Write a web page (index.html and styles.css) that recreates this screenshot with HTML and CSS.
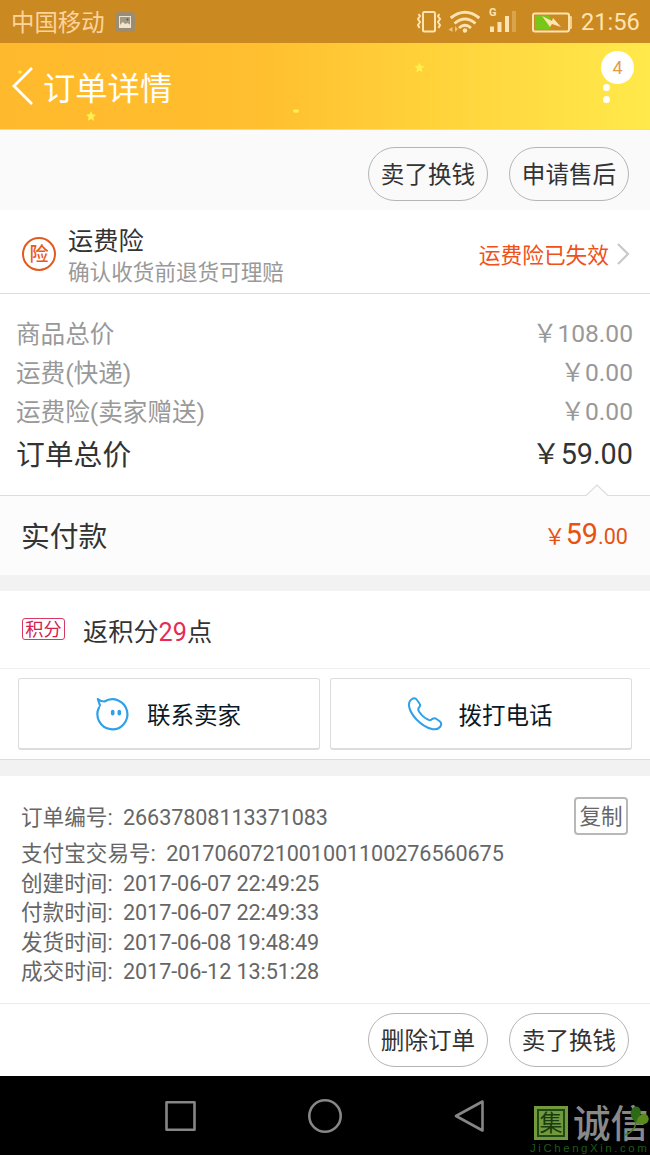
FILE: index.html
```html
<!DOCTYPE html>
<html lang="zh-CN">
<head>
<meta charset="utf-8">
<title>订单详情</title>
<link rel="stylesheet" href="styles.css">
</head>
<body>
<header class="status">
  <span class="carrier">中国移动</span>
  <svg class="shot" width="22" height="22" viewBox="0 0 22 22"><rect x="1" y="1" width="20" height="20" rx="4" fill="#9c8d72"/><rect x="5.500" y="5.500" width="11" height="11" fill="#a39a84" stroke="#eee4cf"/><path d="M6 14l2.500-3 3 2 2-1 3 2v2H6z" fill="#eee4cf"/><circle cx="13.500" cy="8.500" r="1" fill="#5d503a"/></svg>
  <svg class="signals" width="160" height="43" viewBox="415 0 160 43" fill="none" stroke="#ffe3b0" stroke-width="2">
    <rect x="423" y="12" width="12" height="19.500" rx="1.500"/>
    <path d="M418.500 14l1.500 2-2 3 2 3-2 3 1.500 3M439.500 14l-1.500 2 2 3-2 3 2 3-1.500 3" stroke-width="2"/>
    <path d="M450.700 18q14.300-11.500 28.600 0M454.500 23.500q10.500-9 21 0M459 28q6-5.500 12 0" stroke-width="2.900"/>
    <circle cx="465" cy="30.500" r="2.200" fill="#ffe3b0" stroke="none"/>
    <path d="M452.500 27v5l-4-2.500zM455 26v6l3-3z" fill="#ffe3b0" stroke="none" opacity=".65"/>
    <path d="M492 26.500v5.500M499.500 22v10M507 16v16" stroke-width="4"/>
    <path d="M514 11v21" stroke-width="4" opacity=".3"/>
    <text x="489" y="16" class="net">G</text>
    <rect x="533" y="13.500" width="36" height="18" rx="2"/>
    <path d="M569 17h2v11h-2" stroke-width="1.500"/>
    <path d="M535 15.500h14l3 6-2 8h-15z" fill="#77c719" stroke="none"/>
    <path d="M542 16l10 5 1-3 8 9-9-3-2 3z" fill="#ffe3b0" stroke="none"/>
  </svg>
  <span class="clock">21:56</span>
</header>
<div class="titlebar">
  <svg class="back" width="24" height="40" viewBox="0 0 24 40"><path d="M21 2L3 20l18 18" fill="none" stroke="#fff" stroke-width="2.800"/></svg>
  <h1>订单详情</h1>
  <svg class="stars" width="650" height="87" viewBox="0 0 650 87"><defs><path id="star" d="M0-5l1.500 3.300 3.500.4-2.600 2.400.7 3.600L0 3l-3.100 1.700.7-3.600L-5-1.300l3.500-.4z"/></defs><g fill="#fff04e"><use href="#star" x="91" y="73"/><use href="#star" x="419.500" y="24.500"/><ellipse cx="296" cy="68" rx="3" ry="1.800"/><ellipse cx="20" cy="29" rx="2" ry="1.500"/></g></svg>
  <div class="menu"><span class="badge">4</span><i></i><i></i></div>
</div>
<div class="actions top"><button>卖了换钱</button><button>申请售后</button></div>
<section class="insurance">
  <span class="seal">险</span>
  <div class="ins-text"><b>运费险</b><span>确认收货前退货可理赔</span></div>
  <span class="expired">运费险已失效</span>
  <svg class="chev" width="14" height="24" viewBox="0 0 14 24"><path d="M2 2l10 10L2 22" fill="none" stroke="#c9c9c9" stroke-width="2.200"/></svg>
</section>
<section class="prices">
  <div class="row"><span>商品总价</span><span>￥108.00</span></div>
  <div class="row"><span>运费(快递)</span><span>￥0.00</span></div>
  <div class="row"><span>运费险(卖家赠送)</span><span>￥0.00</span></div>
  <div class="row total"><span>订单总价</span><span>￥59.00</span></div>
</section>
<section class="paid">
  <svg class="notch" width="22" height="13" viewBox="0 0 22 13"><path d="M0 12L11 1l11 11v1H0z" fill="#fcfcfc"/><path d="M0 11.500L11 1l11 10.500" fill="none" stroke="#dcdcdc" stroke-width="1.200"/></svg>
  <span>实付款</span><span class="amount">￥<b>59</b>.00</span>
</section>
<div class="gap"></div>
<section class="points"><span class="tag">积分</span><span>返积分<em>29</em>点</span></section>
<section class="contacts">
  <div class="contact">
    <svg width="36" height="36" viewBox="0 0 36 36" fill="none" stroke="#2ea1e8" stroke-width="2.200" stroke-linecap="round" stroke-linejoin="round"><path d="M6 9.500L3.800 3Q6.500 5.500 10.500 5.500A15 15 0 1 1 5 11.500"/><path d="M18.700 15.500v2.200M25.300 15.500v2.200" stroke-width="3.600"/></svg>
    <span>联系卖家</span>
  </div>
  <div class="contact phone">
    <svg width="36" height="36" viewBox="0 0 36 36" fill="none" stroke="#2ea1e8" stroke-width="2" stroke-linejoin="round"><path d="M5 3Q8 1 10 4L12.500 7.500Q14 9.500 12 11.500Q10.500 13 12 15.500Q16 21.500 21 23.500Q23.500 25 25 23.200Q27.500 21.500 29.500 23L33 25.500Q35.500 28 33 31Q30 34.500 24 32.800Q17 31 9.500 23.500Q3 16.500 2 10Q1.500 5 5 3Z"/></svg>
    <span>拨打电话</span>
  </div>
</section>
<div class="gap"></div>
<section class="info">
  <div class="first"><p>订单编号: <span>26637808113371083</span></p><button>复制</button></div>
  <p>支付宝交易号: <span>2017060721001001100276560675</span></p>
  <p>创建时间: <span>2017-06-07 22:49:25</span></p>
  <p>付款时间: <span>2017-06-07 22:49:33</span></p>
  <p>发货时间: <span>2017-06-08 19:48:49</span></p>
  <p>成交时间: <span>2017-06-12 13:51:28</span></p>
</section>
<div class="actions bottom"><button>删除订单</button><button>卖了换钱</button></div>
<footer class="nav">
  <svg width="330" height="44" viewBox="160 1094 330 44" fill="none" stroke="#868686" stroke-width="2.600" stroke-linejoin="round"><rect x="166.500" y="1102.300" width="28" height="27.500"/><circle cx="325" cy="1116" r="15.700"/><path d="M482.500 1101.500v29L456 1116z"/></svg>
  <div class="watermark">
    <div class="brand"><span class="ji"><span>集</span></span><span class="cx">诚信</span></div>
    <div class="site">JiChengXin.com</div>
    <svg class="leaf" width="28" height="34" viewBox="0 0 28 34"><path d="M14 19Q5 10 11 4q5-4 8 3-1 7-5 12" fill="#2c6a16"/><path d="M14 19q3-11 10-9 5 4 1 9-6 3-11 0" fill="#5b8a1c"/><path d="M14 19q-2 9-11 12" fill="none" stroke="#4c7a1c" stroke-width="1.500"/></svg>
  </div>
</footer>
</body>
</html>
```
FILE: styles.css
```css
* { box-sizing: border-box; }
body { margin: 0; width: 650px; height: 1155px; overflow: hidden; background: #fff; color: #333; font-family: Roboto, "Noto Sans CJK SC", sans-serif; display: flex; flex-direction: column; }
body > * { flex-shrink: 0; }
button { font: inherit; color: inherit; padding: 0; background: #fff; }
b, em, h1 { font-weight: 400; font-style: normal; }
p { margin: 0; }

.status { height: 43px; background: #cb8921; color: #ffe3b0; display: flex; align-items: center; padding-left: 11px; }
.carrier { padding-top: 3px; font-size: 23.4px; line-height: 40px; color: #fdd39c; }
.shot { margin-left: 9px; }
.signals { margin-left: auto; }
.net { font: 700 11px Roboto, sans-serif; fill: #ffe3b0; stroke: none; }
.clock { width: 75px; padding: 1px 0 0 6px; font-size: 23.6px; }

.titlebar { position: relative; height: 87px; background: linear-gradient(90deg, #ffb92c 0%, #ffbf2f 40%, #ffd23a 66%, #ffe94b 100%); border-bottom: 1px solid #ffdf68; display: flex; align-items: center; padding-left: 11px; color: #fff; }
.back { margin-right: 8px; }
h1 { margin: 0; padding-top: 6px; font-size: 32.3px; line-height: 44px; }
.stars { position: absolute; left: 0; top: 0; }
.menu { width: 54px; height: 87px; margin-left: auto; padding: 8px 0 0 5px; }
.badge { display: block; width: 33px; height: 33px; border-radius: 50%; background: #fff; color: #e49c46; font-size: 18px; line-height: 34px; text-align: center; }
.menu i { display: block; width: 7px; height: 7px; margin: 0 0 5px 2px; border-radius: 50%; background: #fff; }

.actions { display: flex; justify-content: flex-end; gap: 21px; padding-right: 21px; font-size: 23.6px; }
.actions button { width: 120px; height: 54px; border: 1px solid #b5b5b5; border-radius: 27px; background: transparent; padding-top: 3px; line-height: 49px; }
.top { height: 80px; padding-top: 17px; background: #fafafa; }
.bottom { height: 72px; padding-top: 9px; }

.insurance { height: 84px; border-bottom: 1px solid #dcdcdc; display: flex; align-items: center; padding: 4px 20px 0 22px; }
.seal { width: 34px; height: 34px; border: 2px solid #e35a20; border-radius: 50%; color: #e85a1c; font-size: 19px; line-height: 31px; text-align: center; font-weight: 500; }
.ins-text { margin-left: 12px; padding-top: 5px; display: flex; flex-direction: column; }
.ins-text b { font-size: 25.2px; line-height: 33px; }
.ins-text span { font-size: 21.6px; line-height: 30px; color: #999; }
.expired { margin-left: auto; font-size: 21.7px; color: #f0501a; }
.chev { margin-left: 7px; }

.prices { height: 202px; padding: 20px 17px 0 16px; border-bottom: 1px solid #dcdcdc; color: #999; font-size: 24.6px; }
.row { display: flex; justify-content: space-between; height: 39px; line-height: 39px; }
.row span:first-child { padding-top: 1px; }
.total { height: 48px; line-height: 47px; font-size: 28.8px; color: #333; }

.paid { position: relative; height: 79px; background: #fcfcfc; display: flex; justify-content: space-between; align-items: center; padding: 0 22px 3px 21px; font-size: 28.8px; }
.notch { position: absolute; right: 42px; top: -12px; }
.amount { font-size: 21.6px; color: #e8510f; }
.amount b { font-size: 28.8px; }
.gap { height: 16px; background: #f2f2f2; }

.points { height: 78px; border-bottom: 1px solid #f0f0f0; display: flex; align-items: center; padding: 1px 22px 0; font-size: 25.2px; }
.tag { width: 43px; height: 22px; margin: -2px 18px 0 0; border: 1px solid #d93862; border-radius: 3px; color: #d3214e; font-size: 18.2px; line-height: 22px; text-align: center; }
.points em { color: #e62a56; }

.contacts { height: 91px; padding: 9px 18px 0; border-bottom: 1px solid #dcdcdc; display: flex; gap: 10px; }
.contact { flex: 1; height: 72px; border: 1px solid #dcdcdc; border-bottom-width: 2px; border-radius: 3px; display: flex; align-items: center; padding-left: 75px; font-size: 23.5px; color: #0b1826; }
.contact span { margin-left: 17px; padding-top: 1px; }
.phone { padding-left: 76px; }
.phone span { margin-left: 16px; }

.info { height: 228px; padding: 21px 22px 0 21px; border-bottom: 1px solid #ebebeb; font-size: 21.6px; line-height: 29.500px; color: #666; }
.info p { white-space: nowrap; }
.info p span { margin-left: 5px; letter-spacing: -.08px; }
.first { height: 42px; display: flex; justify-content: space-between; }
.first p { padding-top: 6px; }
.first button { width: 54px; height: 38px; border: 2px solid #b8b8b8; border-radius: 4px; padding-top: 2px; line-height: 32px; }

.nav { position: relative; height: 79px; background: #000; padding: 18px 0 0 160px; }
.watermark { position: absolute; left: 530px; top: 28px; width: 120px; height: 51px; }
.brand { display: flex; align-items: center; height: 38px; padding-left: 4px; }
.ji { width: 34px; height: 34px; padding: 3px; background: #73993f; color: #173c0d; }
.ji span { display: block; width: 28px; height: 28px; border: 2px solid #1f4a12; font-size: 23px; line-height: 25px; text-indent: .5px; }
.cx { margin-left: 5px; padding-top: 3px; font-size: 37.5px; line-height: 37px; font-weight: 500; color: #898989; white-space: nowrap; }
.site { font: 11.5px/13px "Liberation Sans", sans-serif; letter-spacing: 2.55px; color: #1d5a1a; white-space: nowrap; }
.leaf { position: absolute; right: 0; top: 0; }
```
